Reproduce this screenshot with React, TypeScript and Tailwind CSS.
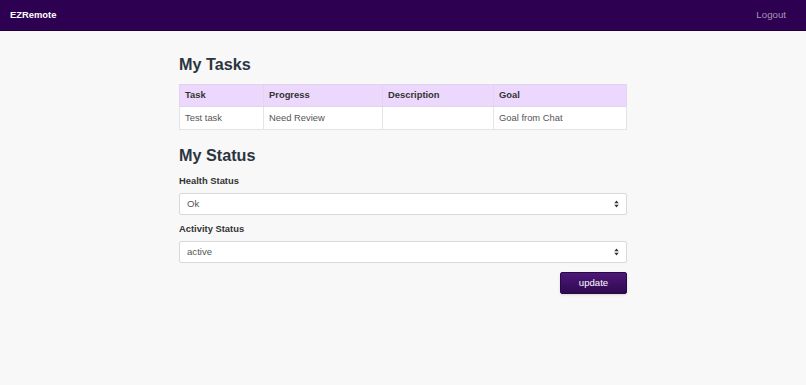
import * as React from 'react';

const tarefas = [
    { tarefa: 'Test task', progresso: 'Need Review', descricao: '', objetivo: 'Goal from Chat' },
];

const Setas: React.FC = () => (
    <svg width="5" height="8" viewBox="0 0 5 8" className="pointer-events-none absolute right-[8px] top-1/2 -translate-y-1/2">
        <path d="M2.5 0.5 L4.7 3.3 L0.3 3.3 Z" fill="#333" />
        <path d="M2.5 7.5 L4.7 4.7 L0.3 4.7 Z" fill="#333" />
    </svg>
);

const CampoSelect: React.FC<{ rotulo: string; valor: string; opcoes: string[] }> = ({ rotulo, valor, opcoes }) => {
    const [atual, setAtual] = React.useState(valor);
    return (
        <div>
            <label className="block h-[12px] text-[9.4px] font-bold leading-[12px] text-[#333]">{rotulo}</label>
            <div className="relative mt-[6px] h-[22px]">
                <select
                    value={atual}
                    onChange={(e) => setAtual(e.target.value)}
                    className="block h-[22px] w-full appearance-none rounded-[2px] border border-[#d9d9d9] bg-white px-[7px] text-[9.6px] text-[#555] outline-none"
                >
                    {opcoes.map((o) => (
                        <option key={o} value={o}>{o}</option>
                    ))}
                </select>
                <Setas />
            </div>
        </div>
    );
};

export default function App() {
    return (
        <div className="min-h-[385px] bg-[#f8f8f8] font-['Liberation_Sans',Arial,sans-serif]">
            <nav className="flex h-[31px] items-center justify-between border-b border-[#1f0037] bg-[#2e0052] pl-[10px] pr-[20px]">
                <span className="text-[9.4px] font-bold text-white">EZRemote</span>
                <a href="#" className="text-[9.7px] text-[#a597b4]">Logout</a>
            </nav>

            <main className="mx-auto w-[448px] pt-[23px]">
                <h1 className="h-[20px] text-[16.2px] font-bold leading-[20px] text-[#2b3540]">My Tasks</h1>

                <table className="mt-[10px] w-full border-collapse text-left text-[9.4px]">
                    <thead>
                        <tr className="h-[22px] bg-[#ebd8fc]">
                            <th className="w-[84px] border border-[#e2d3ee] pl-[5px] font-bold text-[#333]">Task</th>
                            <th className="w-[119px] border border-[#e2d3ee] pl-[5px] font-bold text-[#333]">Progress</th>
                            <th className="w-[111px] border border-[#e2d3ee] pl-[5px] font-bold text-[#333]">Description</th>
                            <th className="border border-[#e2d3ee] pl-[5px] font-bold text-[#333]">Goal</th>
                        </tr>
                    </thead>
                    <tbody>
                        {tarefas.map((t) => (
                            <tr key={t.tarefa} className="h-[23px] bg-white">
                                <td className="border border-[#e4e4e4] pl-[5px] text-[#555]">{t.tarefa}</td>
                                <td className="border border-[#e4e4e4] pl-[5px] text-[#555]">{t.progresso}</td>
                                <td className="border border-[#e4e4e4] pl-[5px] text-[#555]">{t.descricao}</td>
                                <td className="border border-[#e4e4e4] pl-[5px] text-[#555]">{t.objetivo}</td>
                            </tr>
                        ))}
                    </tbody>
                </table>

                <h1 className="mt-[15px] h-[20px] text-[16.2px] font-bold leading-[20px] text-[#2b3540]">My Status</h1>

                <div className="mt-[10px] flex flex-col gap-[8px]">
                    <CampoSelect rotulo="Health Status" valor="Ok" opcoes={['Ok', 'Sick']} />
                    <CampoSelect rotulo="Activity Status" valor="active" opcoes={['active', 'inactive']} />
                </div>

                <div className="mt-[9px] flex justify-end">
                    <button className="h-[22px] w-[67px] rounded-[2px] border border-[#2a0a45] bg-gradient-to-b from-[#4f1878] to-[#2f0a52] text-[9.6px] text-white shadow-sm">
                        update
                    </button>
                </div>
            </main>
        </div>
    );
}
